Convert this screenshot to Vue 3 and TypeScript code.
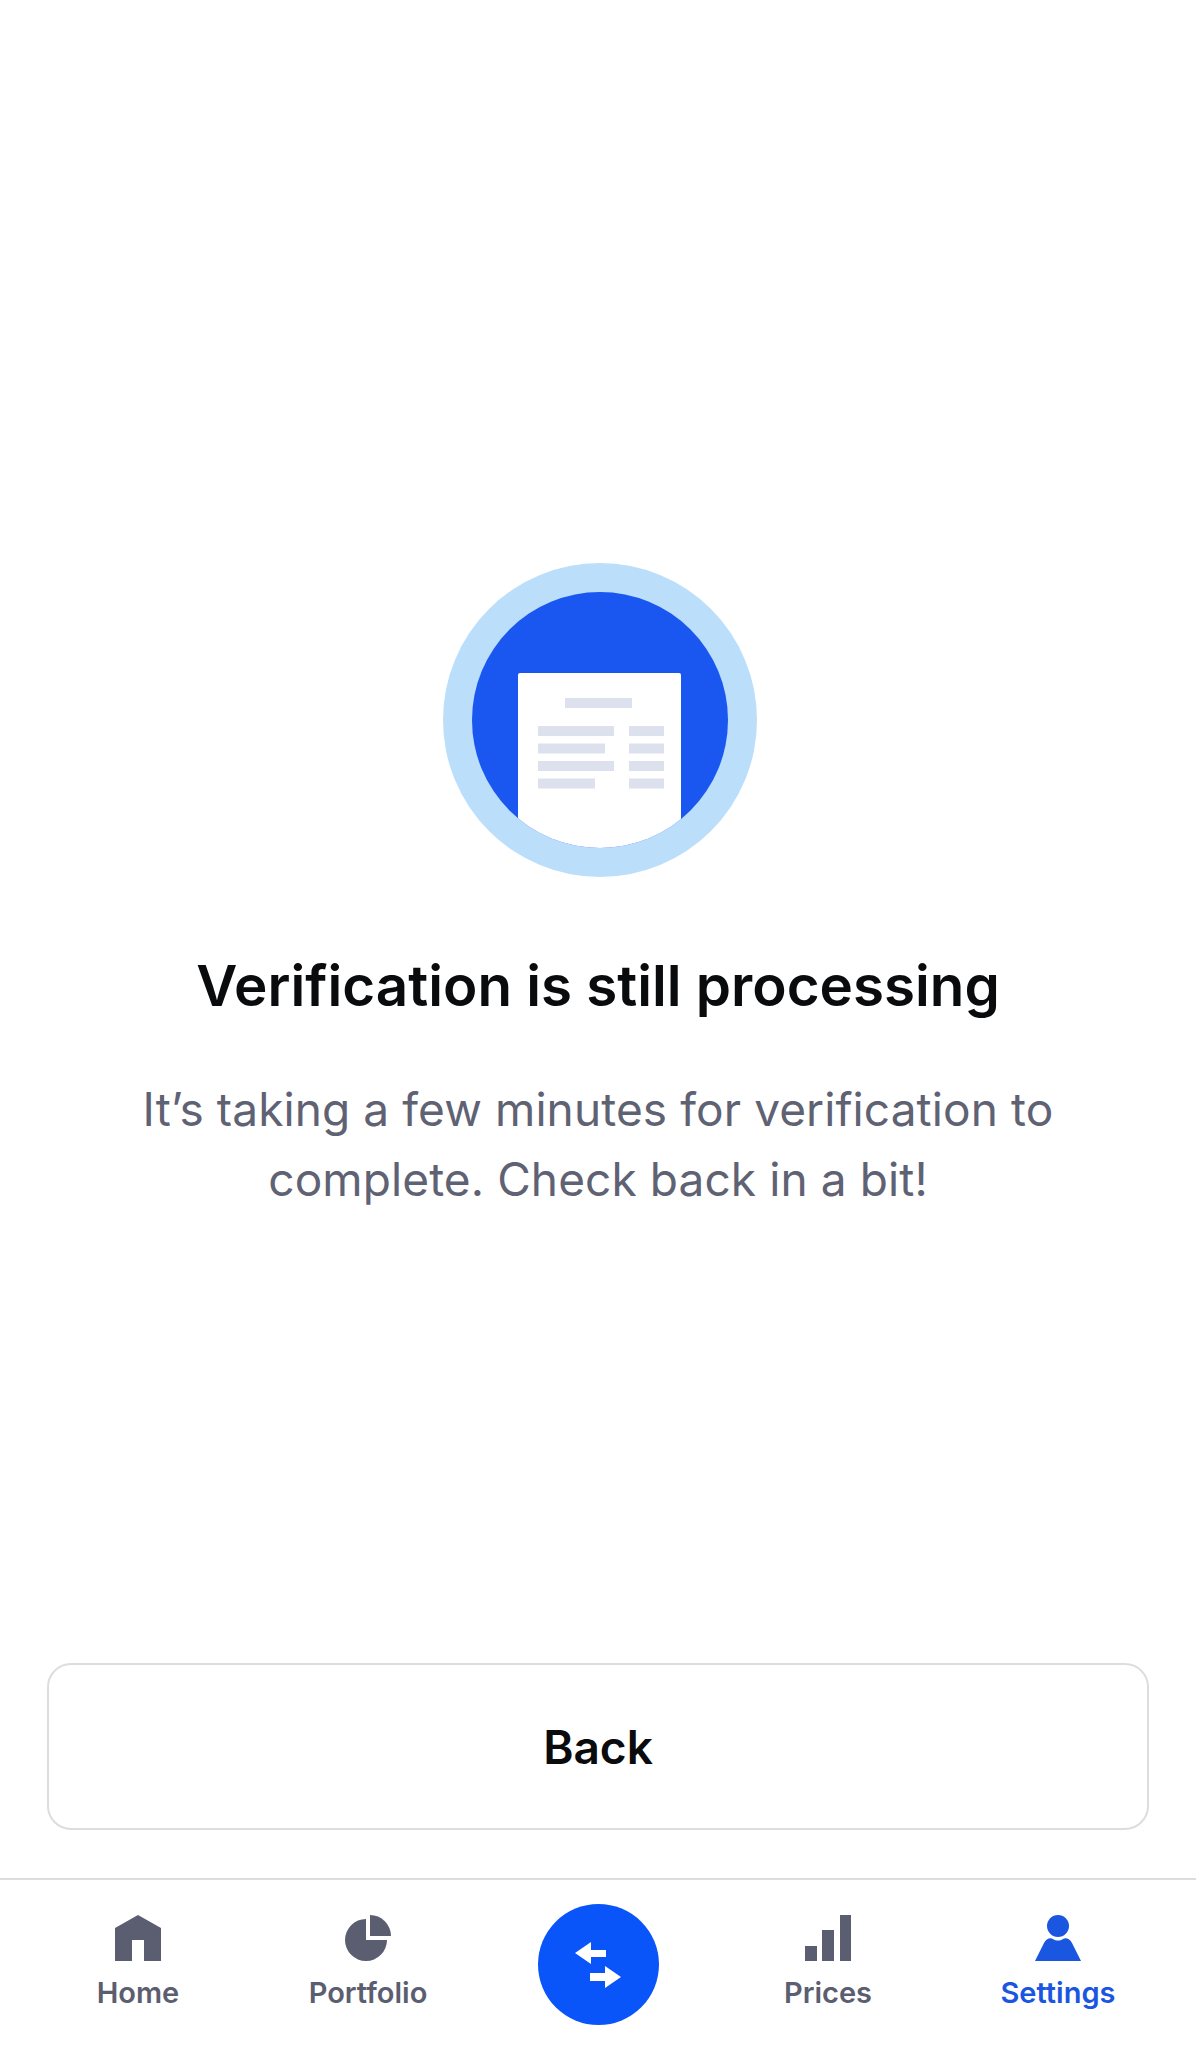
<template>
  <div class="page">
    <main class="content">
      <svg class="badge" width="314" height="314" viewBox="0 0 314 314">
        <defs>
          <clipPath id="inner-circle">
            <circle cx="157" cy="157" r="128" />
          </clipPath>
        </defs>
        <circle cx="157" cy="157" r="157" fill="#bbdefb" />
        <circle cx="157" cy="157" r="128" fill="#1a56f0" />
        <g clip-path="url(#inner-circle)">
          <rect x="75" y="110" width="163" height="210" rx="2" fill="#fff" />
          <rect x="122" y="135" width="67" height="10" fill="#dde1ee" />
          <template v-for="(w, i) in rowWidths" :key="i">
            <rect x="95" :y="163 + i * 17.5" :width="w" height="10" fill="#dde1ee" />
            <rect x="186" :y="163 + i * 17.5" width="35" height="10" fill="#dde1ee" />
          </template>
        </g>
      </svg>
      <h1 class="title">Verification is still processing</h1>
      <p class="message">It’s taking a few minutes for verification to<br />complete. Check back in a bit!</p>
    </main>

    <button class="back">Back</button>

    <nav class="tabs">
      <a class="tab">
        <svg width="46" height="46" viewBox="0 0 46 46">
          <path d="M23 0 46 13V46H29V25H17V46H0V13Z" fill="currentColor" />
        </svg>
        <span>Home</span>
      </a>
      <a class="tab">
        <svg width="46" height="46" viewBox="0 0 46 46">
          <path d="M21 4V25H42A21 21 0 1 1 21 4Z" fill="currentColor" />
          <path d="M25 0A21 21 0 0 1 46 21H25Z" fill="currentColor" />
        </svg>
        <span>Portfolio</span>
      </a>
      <a class="tab">
        <span class="swap">
          <svg width="46" height="46" viewBox="0 0 46 46">
            <path d="M0 11 16 0V8H31V15H16V22Z" fill="#fff" />
            <path d="M46 35 30 24V31H15V39H30V46Z" fill="#fff" />
          </svg>
        </span>
      </a>
      <a class="tab">
        <svg width="46" height="46" viewBox="0 0 46 46">
          <rect x="0" y="31" width="12" height="15" fill="currentColor" />
          <rect x="17" y="15" width="12" height="31" fill="currentColor" />
          <rect x="35" y="0" width="11" height="46" fill="currentColor" />
        </svg>
        <span>Prices</span>
      </a>
      <a class="tab active">
        <svg width="46" height="46" viewBox="0 0 46 46">
          <circle cx="23" cy="11" r="11" fill="currentColor" />
          <path d="M0 46 9 28C11 24 15 22 18 24 21 26 25 26 28 24 31 22 35 24 37 28L46 46Z" fill="currentColor" />
        </svg>
        <span>Settings</span>
      </a>
    </nav>
  </div>
</template>

<script setup lang="ts">
const rowWidths: number[] = [76, 67, 76, 57];
</script>

<style scoped>
.page {
  display: flex;
  flex-direction: column;
  height: 2048px;
  font-family: Inter, "Liberation Sans", sans-serif;
  background: #fff;
  overflow: hidden;
}
.content {
  flex: 1;
  display: flex;
  flex-direction: column;
  align-items: center;
  padding-top: 563px;
}
.badge {
  display: block;
  margin-left: 3px;
}
.title {
  margin: 74px 0 0;
  font-size: 56.500px;
  line-height: 70px;
  font-weight: 600;
  color: #0a0b0d;
}
.message {
  margin: 53px 0 0;
  font-size: 46px;
  line-height: 70px;
  font-weight: 400;
  letter-spacing: 0.1px;
  text-align: center;
  color: #5f6273;
}
.back {
  margin: 0 47px 48px;
  height: 167px;
  border: 2px solid #ddd;
  border-radius: 24px;
  background: #fff;
  font-family: inherit;
  font-size: 46px;
  font-weight: 600;
  color: #0a0b0d;
}
.tabs {
  display: grid;
  grid-template-columns: repeat(5, 1fr);
  height: 168px;
  padding: 0 23px;
  border-top: 2px solid #ddd;
}
.tab {
  display: flex;
  flex-direction: column;
  align-items: center;
  padding-top: 35px;
  color: #5b5e70;
  font-size: 29px;
  line-height: 36px;
  font-weight: 600;
}
.tab svg {
  display: block;
}
.tab span:not(.swap) {
  margin-top: 14px;
}
.tab.active {
  color: #1a56e0;
}
.swap {
  display: flex;
  align-items: center;
  justify-content: center;
  width: 121px;
  height: 121px;
  margin-top: -11px;
  border-radius: 50%;
  background: #0a55fa;
}
</style>

<style>
html,
body {
  background: #fff;
}
</style>
